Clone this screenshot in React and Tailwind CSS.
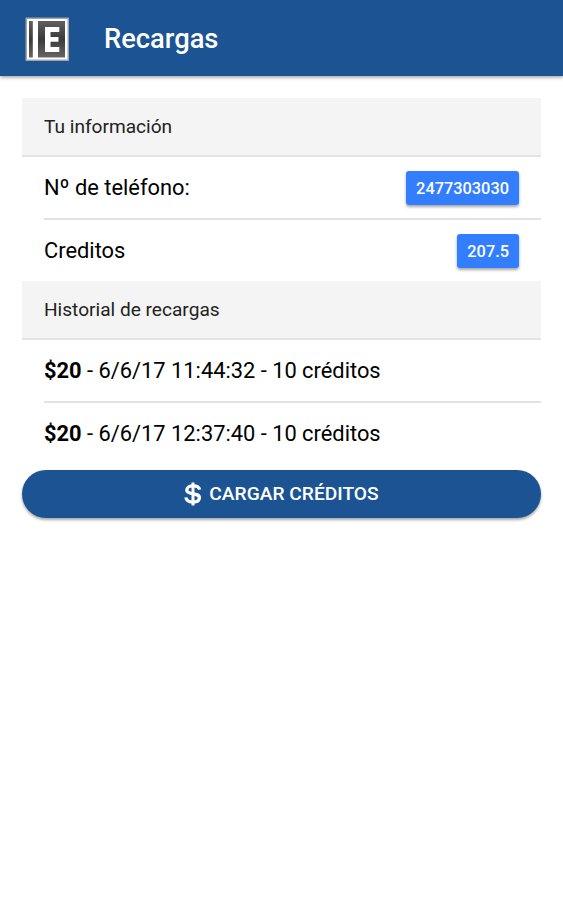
const recharges = [
    { amount: "$20", detail: "6/6/17 11:44:32 - 10 créditos" },
    { amount: "$20", detail: "6/6/17 12:37:40 - 10 créditos" },
];

const Logo = () => (
    <svg className="h-[44px] w-[44px]" viewBox="0 0 44 44">
        <defs>
            <linearGradient id="cover" x1="0" y1="0" x2="0" y2="1">
                <stop offset="0" stopColor="#606060" />
                <stop offset="0.5" stopColor="#3a3a3a" />
                <stop offset="1" stopColor="#666666" />
            </linearGradient>
        </defs>
        <rect x="0.5" y="0.5" width="43.5" height="43.5" fill="#a1a4a8" />
        <rect x="2" y="2" width="40.5" height="40.5" fill="#ffffff" />
        <rect x="4" y="4" width="3.8" height="36.5" fill="url(#cover)" />
        <rect x="13" y="4" width="27" height="36.5" fill="url(#cover)" />
        <path d="M20 10h14.3v5h-8.8v5h8v4.8h-8v5.2h8.8v5H20z" fill="#ffffff" />
    </svg>
);

const DollarIcon = () => (
    <svg className="h-6 w-[18px]" viewBox="0 0 18 24" fill="none" stroke="#ffffff">
        <path d="M15.7 7.7C15.2 5.3 12.8 3.9 9 3.9c-3.7 0-6.2 1.6-6.2 4.1C2.8 13.7 15.4 9.8 15.4 15.8c0 2.7-2.6 4.3-6.4 4.3-4.1 0-6.7-1.7-7.1-4.7" strokeWidth="3.3" />
        <path d="M9 0.5v23" strokeWidth="3" />
    </svg>
);

const Divider = ({ children }) => (
    <div className="flex h-[59px] items-center border-b-2 border-[#e4e4e4] bg-[#f4f4f4] pt-px pl-[22px] text-[19.1px] text-[#222222]">
        {children}
    </div>
);

const Item = ({ children, last }) => (
    <div className="pl-[22px]">
        <div className={`flex items-center justify-between pr-[22px] text-[21.85px] ${last ? "h-[61px]" : "h-[63px] border-b-2 border-[#e2e2e2]"}`}>
            {children}
        </div>
    </div>
);

const Badge = ({ children }) => (
    <span className="flex h-[34px] items-center rounded-[3px] bg-[#327eff] px-[10px] pt-[3px] text-[16.35px] font-medium text-white shadow-[0_2px_3px_rgba(0,0,0,0.35)]">
        {children}
    </span>
);

const App = () => {
    return (
        <div className="min-h-screen bg-white font-['Roboto',sans-serif] leading-none text-black">
            <header className="flex h-[76px] items-center bg-[#1c5393] pt-px pl-[25px] shadow-[0_1px_4px_rgba(0,0,0,0.45)]">
                <Logo />
                <h1 className="ml-[35px] pt-[3px] text-[27.3px] font-medium text-white">Recargas</h1>
            </header>

            <main className="px-[22px] pt-[22px]">
                {/* Account info */}
                <Divider>Tu información</Divider>
                <Item>
                    <span>Nº de teléfono:</span>
                    <Badge>2477303030</Badge>
                </Item>
                <Item last>
                    <span>Creditos</span>
                    <Badge>207.5</Badge>
                </Item>

                {/* Recharge history */}
                <Divider>Historial de recargas</Divider>
                {recharges.map((item, i) => (
                    <Item key={item.detail} last={i === recharges.length - 1}>
                        <span>
                            <b>{item.amount}</b> - {item.detail}
                        </span>
                    </Item>
                ))}

                <button className="mt-[6px] flex h-[48px] w-full items-center justify-center gap-[7px] rounded-full bg-[#1c5393] text-[19.2px] font-medium text-white shadow-[0_2px_3px_rgba(0,0,0,0.35)]">
                    <DollarIcon />
                    CARGAR CRÉDITOS
                </button>
            </main>
        </div>
    );
};

export default App;
